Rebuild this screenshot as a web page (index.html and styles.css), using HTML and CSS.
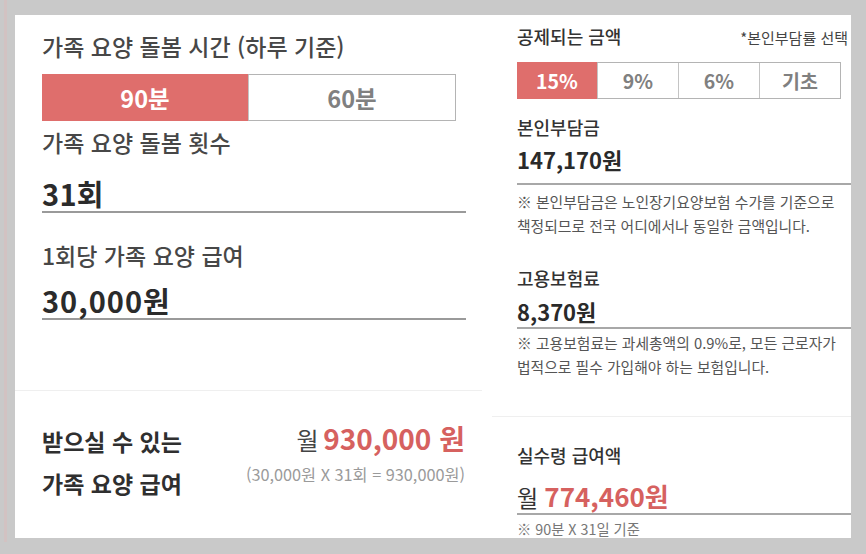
FILE: index.html
```html
<!DOCTYPE html>
<html lang="ko">
<head>
<meta charset="utf-8">
<title>가족 요양 급여 계산</title>
<link rel="stylesheet" href="styles.css">
</head>
<body>
<div class="screen">
  <section class="panel panel-left">
    <div class="inputs">
      <h2 class="title">가족 요양 돌봄 시간 (하루 기준)</h2>
      <div class="seg seg-time">
        <div class="seg-item active">90분</div>
        <div class="seg-item">60분</div>
      </div>
      <div class="label label-count">가족 요양 돌봄 횟수</div>
      <div class="field field-count">31회</div>
      <div class="label label-pay">1회당 가족 요양 급여</div>
      <div class="field field-pay">30,000원</div>
    </div>
    <div class="summary">
      <div class="summary-label">
        <div>받으실 수 있는</div>
        <div>가족 요양 급여</div>
      </div>
      <div class="summary-value">
        <div class="total"><span class="month">월</span> <span class="amount">930,000 원</span></div>
        <div class="formula">(30,000원 X 31회 = 930,000원)</div>
      </div>
    </div>
  </section>
  <section class="panel panel-right">
    <div class="deduct">
      <div class="head">
        <span class="head-title">공제되는 금액</span>
        <span class="head-note">*본인부담률 선택</span>
      </div>
      <div class="seg seg-rate">
        <div class="seg-item active">15%</div>
        <div class="seg-item">9%</div>
        <div class="seg-item">6%</div>
        <div class="seg-item">기초</div>
      </div>
      <div class="r-label r-label-first">본인부담금</div>
      <div class="r-field r-field-first">147,170원</div>
      <div class="note note-first">※ 본인부담금은 노인장기요양보험 수가를 기준으로<br>책정되므로 전국 어디에서나 동일한 금액입니다.</div>
      <div class="r-label r-label-second">고용보험료</div>
      <div class="r-field r-field-second">8,370원</div>
      <div class="note note-second">※ 고용보험료는 과세총액의 0.9%로, 모든 근로자가<br>법적으로 필수 가입해야 하는 보험입니다.</div>
    </div>
    <div class="net">
      <div class="r-label">실수령 급여액</div>
      <div class="r-field net-field"><span class="month">월</span> <span class="amount">774,460원</span></div>
      <div class="note net-note">※ 90분 X 31일 기준</div>
    </div>
  </section>
</div>
</body>
</html>
```
FILE: styles.css
```css
* { box-sizing: border-box; margin: 0; padding: 0; }

html, body {
  width: 866px;
  height: 554px;
  overflow: hidden;
}

body {
  font-family: "Noto Sans CJK KR", "Noto Sans", sans-serif;
  color: #333;
  background:
    linear-gradient(90deg, transparent 4px, #d2c2c2 4px, #d2c2c2 7px, transparent 7px) no-repeat 0 0 / 10px 542px,
    #c9c9c9;
}

.screen {
  display: flex;
  padding: 15px 15px 0 15px;
  height: 554px;
}

.panel {
  background: #fff;
  height: 523px;
  overflow: hidden;
}

.panel-left { width: 467px; }
.panel-right { width: 369px; }

/* ---------- left panel ---------- */
.inputs {
  padding: 16px 16px 0 27px;
  height: 376px;
  border-bottom: 1px solid #efefef;
}

.title {
  font-size: 23px;
  font-weight: 500;
  line-height: 30px;
  color: #474747;
}

.seg {
  display: flex;
  border: 1px solid #b4b4b4;
  background: #fff;
}

.seg-item {
  flex: 1;
  display: flex;
  align-items: center;
  justify-content: center;
  font-weight: 700;
  color: #808080;
}

.seg-item + .seg-item { border-left: 1px solid #c4c4c4; }

.seg-item.active {
  background: #df6e6c;
  color: #fff;
}

.seg-time {
  margin-top: 13px;
  margin-right: 10px;
  height: 47px;
}

.seg-time .seg-item { font-size: 23.5px; }
.seg-time .seg-item.active { margin: -1px 0 -1px -1px; }

.label {
  font-size: 23px;
  font-weight: 500;
  line-height: 30px;
  color: #474747;
}

.label-count { margin-top: 6px; }
.label-pay { margin-top: 27px; }

.field {
  font-size: 29px;
  font-weight: 700;
  line-height: 34px;
  color: #2b2b2b;
  border-bottom: 2px solid #9a9a9a;
  padding-bottom: 1px;
  letter-spacing: 0.3px;
}

.field-count { margin-top: 19px; }
.field-pay { margin-top: 13px; letter-spacing: 1px; }

.summary {
  display: flex;
  justify-content: space-between;
  padding: 29px 17px 0 27px;
}

.summary-label {
  font-size: 23px;
  font-weight: 700;
  line-height: 42px;
  color: #2f2f2f;
}

.summary-value {
  text-align: right;
  padding-top: 1px;
}

.total {
  line-height: 34px;
}

.total .month {
  font-size: 24px;
  font-weight: 400;
  color: #444;
}

.total .amount {
  font-size: 28px;
  font-weight: 700;
  color: #d6615f;
}

.formula {
  margin-top: 4px;
  font-size: 16.3px;
  line-height: 20px;
  color: #9a9a9a;
}

/* ---------- right panel ---------- */
.deduct {
  padding: 8px 0 0 25px;
  margin-left: 10px;
  height: 402px;
  border-bottom: 1px solid #efefef;
}

.head {
  display: flex;
  justify-content: space-between;
  align-items: baseline;
  padding-right: 3px;
  line-height: 26px;
}

.head-title {
  font-size: 18px;
  font-weight: 500;
  color: #333;
}

.head-note {
  font-size: 15px;
  color: #444;
}

.seg-rate {
  margin-top: 11px;
  margin-right: 10px;
  height: 37px;
}

.seg-rate .seg-item { font-size: 19.5px; }
.seg-rate .seg-item.active { margin: -1px 0 -1px -1px; }

.r-label {
  font-size: 18px;
  font-weight: 500;
  line-height: 26px;
  color: #333;
}

.r-label-first { margin-top: 15px; }
.r-label-second { margin-top: 27px; }

.r-field {
  font-size: 22px;
  font-weight: 700;
  line-height: 30px;
  color: #2a2a2a;
  border-bottom: 2px solid #a8a8a8;
}

.r-field-first { margin-top: 4px; padding-bottom: 9px; }
.r-field-second { margin-top: 5px; padding-bottom: 1px; }

.note {
  font-size: 14.8px;
  line-height: 24px;
  color: #555;
}

.note-first { margin-top: 5px; }
.note-second { margin-top: 2px; }

.net {
  padding-left: 35px;
  padding-top: 25px;
}

.net-field {
  margin-top: 13px;
  padding-bottom: 1px;
}

.net-field .month {
  font-size: 23px;
  font-weight: 400;
  color: #333;
}

.net-field .amount {
  font-size: 26px;
  font-weight: 700;
  color: #d6615f;
}

.net-note {
  margin-top: 6px;
  font-size: 14.3px;
  line-height: 16px;
  color: #777;
}
```
